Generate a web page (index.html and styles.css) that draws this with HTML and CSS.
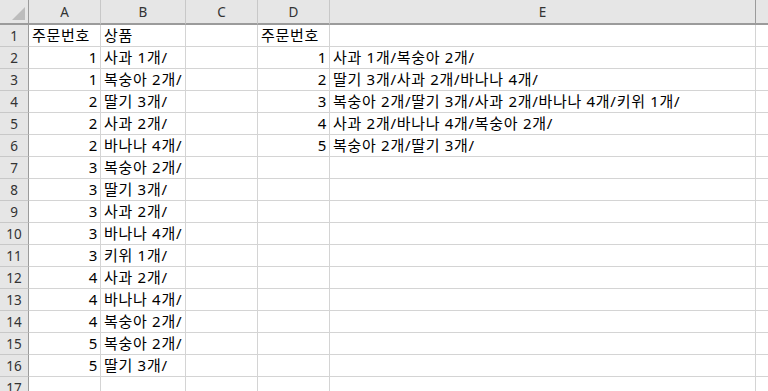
FILE: index.html
```html
<!DOCTYPE html>
<html lang="ko">
<head>
<meta charset="utf-8">
<link rel="stylesheet" href="styles.css">
</head>
<body>
<div class="sheet">
  <div class="corner"><span class="tri"></span></div>
  <div class="ch">A</div><div class="ch">B</div><div class="ch">C</div><div class="ch">D</div><div class="ch">E</div><div class="ch last"></div>

  <div class="rh">1</div><div class="c">주문번호</div><div class="c">상품</div><div class="c"></div><div class="c">주문번호</div><div class="c"></div><div class="c"></div>
  <div class="rh">2</div><div class="c n">1</div><div class="c">사과 1개/</div><div class="c"></div><div class="c n">1</div><div class="c">사과 1개/복숭아 2개/</div><div class="c"></div>
  <div class="rh">3</div><div class="c n">1</div><div class="c">복숭아 2개/</div><div class="c"></div><div class="c n">2</div><div class="c">딸기 3개/사과 2개/바나나 4개/</div><div class="c"></div>
  <div class="rh">4</div><div class="c n">2</div><div class="c">딸기 3개/</div><div class="c"></div><div class="c n">3</div><div class="c">복숭아 2개/딸기 3개/사과 2개/바나나 4개/키위 1개/</div><div class="c"></div>
  <div class="rh">5</div><div class="c n">2</div><div class="c">사과 2개/</div><div class="c"></div><div class="c n">4</div><div class="c">사과 2개/바나나 4개/복숭아 2개/</div><div class="c"></div>
  <div class="rh">6</div><div class="c n">2</div><div class="c">바나나 4개/</div><div class="c"></div><div class="c n">5</div><div class="c">복숭아 2개/딸기 3개/</div><div class="c"></div>
  <div class="rh">7</div><div class="c n">3</div><div class="c">복숭아 2개/</div><div class="c"></div><div class="c"></div><div class="c"></div><div class="c"></div>
  <div class="rh">8</div><div class="c n">3</div><div class="c">딸기 3개/</div><div class="c"></div><div class="c"></div><div class="c"></div><div class="c"></div>
  <div class="rh">9</div><div class="c n">3</div><div class="c">사과 2개/</div><div class="c"></div><div class="c"></div><div class="c"></div><div class="c"></div>
  <div class="rh">10</div><div class="c n">3</div><div class="c">바나나 4개/</div><div class="c"></div><div class="c"></div><div class="c"></div><div class="c"></div>
  <div class="rh">11</div><div class="c n">3</div><div class="c">키위 1개/</div><div class="c"></div><div class="c"></div><div class="c"></div><div class="c"></div>
  <div class="rh">12</div><div class="c n">4</div><div class="c">사과 2개/</div><div class="c"></div><div class="c"></div><div class="c"></div><div class="c"></div>
  <div class="rh">13</div><div class="c n">4</div><div class="c">바나나 4개/</div><div class="c"></div><div class="c"></div><div class="c"></div><div class="c"></div>
  <div class="rh">14</div><div class="c n">4</div><div class="c">복숭아 2개/</div><div class="c"></div><div class="c"></div><div class="c"></div><div class="c"></div>
  <div class="rh">15</div><div class="c n">5</div><div class="c">복숭아 2개/</div><div class="c"></div><div class="c"></div><div class="c"></div><div class="c"></div>
  <div class="rh">16</div><div class="c n">5</div><div class="c">딸기 3개/</div><div class="c"></div><div class="c"></div><div class="c"></div><div class="c"></div>
  <div class="rh">17</div><div class="c"></div><div class="c"></div><div class="c"></div><div class="c"></div><div class="c"></div><div class="c"></div>
</div>
</body>
</html>
```
FILE: styles.css
```css
html, body {
  margin: 0;
  padding: 0;
  background: #ffffff;
  overflow: hidden;
}
.sheet {
  display: grid;
  grid-template-columns: 29px 72px 85px 72px 72px 426px 40px;
  grid-template-rows: 25px repeat(17, 22px);
  font-family: "Noto Sans", "Noto Sans CJK KR", sans-serif;
  font-size: 15px;
  color: #000;
}
.corner {
  position: relative;
  background: #e6e6e6;
  border-right: 1px solid #9b9b9b;
  border-bottom: 2px solid #9b9b9b;
  box-sizing: border-box;
}
.tri {
  position: absolute;
  right: 3px;
  bottom: 3px;
  width: 0;
  height: 0;
  border-left: 13px solid transparent;
  border-bottom: 13px solid #bcbcbc;
}
.ch {
  background: #e6e6e6;
  border-right: 1px solid #c8c8c8;
  border-bottom: 2px solid #9b9b9b;
  box-sizing: border-box;
  display: flex;
  align-items: center;
  justify-content: center;
  font-family: "Noto Sans", sans-serif;
  font-size: 13.5px;
  color: #333;
}
.ch.last {
  border-left: 1px solid #9b9b9b;
  border-right: none;
  margin-left: -1px;
}
.rh {
  background: #e6e6e6;
  border-right: 1px solid #9b9b9b;
  border-bottom: 1px solid #c8c8c8;
  box-sizing: border-box;
  display: flex;
  align-items: center;
  justify-content: center;
  font-family: "Noto Sans", sans-serif;
  font-size: 13.5px;
  color: #333;
}
.c {
  border-right: 1px solid #d4d4d4;
  border-bottom: 1px solid #d4d4d4;
  box-sizing: border-box;
  display: flex;
  align-items: center;
  padding: 0 3px;
  white-space: nowrap;
  line-height: 1;
  letter-spacing: 0.7px;
}
.c.n {
  justify-content: flex-end;
  padding-right: 2px;
}
```
